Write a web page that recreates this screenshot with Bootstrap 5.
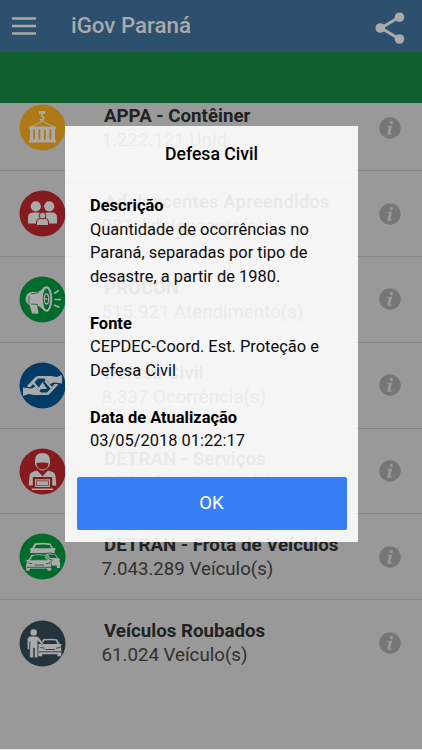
<!DOCTYPE html>
<html lang="pt-BR">
<head>
<meta charset="utf-8">
<meta name="viewport" content="width=device-width, initial-scale=1">
<title>iGov Paraná</title>
<link href="https://cdn.jsdelivr.net/npm/bootstrap@5.3.0/dist/css/bootstrap.min.css" rel="stylesheet">
<style>
  html, body { height: 750px; overflow: hidden; }
  body { font-family: Roboto, "Liberation Sans", sans-serif; background: #999; color: #222; }
  svg { display: block; flex: none; }
  .app { height: 750px; border-bottom: 1px solid #e6e6e6; }
  .topbar { height: 52px; background: #2d506f; color: #aaa; padding: 0 17px 0 12px; position: relative; z-index: 2; }
  .topbar-title { font-size: 22.3px; font-weight: 500; line-height: 1; margin-left: 35px; margin-top: -1px; }
  .greenbar { height: 51px; background: #10602f; position: relative; z-index: 2; }
  .entries { margin-top: -17.5px; }
  .entry { height: 85.8px; border-bottom: 1.5px solid #858585; padding: 0 21px 0 19px; }
  .entry:last-child { border-bottom: 0; }
  .entry-text { margin-left: 36px; padding-top: 18.5px; white-space: nowrap; }
  .entry-name { font-size: 18.7px; font-weight: 700; line-height: 25px; padding-left: 2px; }
  .entry-value { font-size: 18.7px; line-height: 22px; color: #303030; margin-left: -.5px; }
  .detail { width: 293px; height: 415.5px; top: 126px; left: 65px; background: rgba(255,255,255,.9); color: #000; z-index: 5; }
  .detail-title { height: 56.5px; font-size: 17.6px; font-weight: 500; border-bottom: 1px solid #f0f0f0; }
  .detail-body { padding: 11.5px 25px 0; font-size: 16.45px; line-height: 23.5px; height: 294.5px; color: #0c0c0c; white-space: nowrap; }
  .detail-body p { margin-bottom: 23.5px; }
  .detail-body strong { color: #000; font-weight: 700; }
  .ok { height: 53px; margin: 0 11.5px; background: #387ef5; color: #fff; border: 0; border-radius: 2px; font-size: 18.6px; width: 270px; }
</style>
<script src="https://cdn.jsdelivr.net/npm/bootstrap@5.3.0/dist/js/bootstrap.bundle.min.js"></script>
</head>
<body>
<svg width="0" height="0" class="position-absolute" aria-hidden="true">
  <symbol id="info" viewBox="0 0 22 22">
    <circle cx="11" cy="11" r="10.7" fill="#767676"/>
    <circle cx="12.3" cy="5.4" r="1.7" fill="#999"/>
    <path d="M7.900 9.200 13.200 8.600 11.400 15.800q-.2 1 .5.7l1.200-.7.3.6q-2 1.800-3.700 1.700-1.700-.2-1.300-2l1.300-5.200q.2-.8-.5-.9l-1.400-.1z" fill="#999"/>
  </symbol>
</svg>
<div class="app">
  <header class="topbar d-flex align-items-center">
    <svg width="24" height="18" viewBox="0 0 24 18"><path d="M0 1.500h24M0 9h24M0 16.500h24" stroke="#aaa" stroke-width="2.500"/></svg>
    <div class="topbar-title">iGov Paraná</div>
    <svg class="ms-auto mt-1" width="30" height="32" viewBox="0 0 30 32"><path d="M24.500 5 6 16 24.500 27" fill="none" stroke="#aaa" stroke-width="3"/><circle cx="24.500" cy="5.200" r="4.800" fill="#aaa"/><circle cx="5.300" cy="16" r="4.800" fill="#aaa"/><circle cx="24.500" cy="27" r="4.800" fill="#aaa"/></svg>
  </header>
  <div class="greenbar"></div>
  <main class="entries">
    <div class="entry d-flex align-items-center">
      <svg width="47" height="47" viewBox="0 0 47 47"><circle cx="23.500" cy="23.500" r="23" fill="#ad7a17"/>
        <path d="M20 7h6v3h-6z" fill="#aaa"/><path d="M23 9.500v3q2.500 1 1.300 3-2 1.500-3.300-.5" fill="none" stroke="#aaa" stroke-width="1.600"/><path d="M23 17.300 12 23M23.500 17.300 35 23" stroke="#aaa" stroke-width="1"/>
        <path fill="#aaa" fill-rule="evenodd" d="M10 22.500h27v2.500h-1v11h1v2.500H10V36h1V25h-1zM14.200 25.500v10h1.800v-10zM19.500 25.500v10h1.800v-10zM25 25.500v10h1.800v-10zM30.500 25.500v10h1.800v-10z"/></svg>
      <div class="entry-text align-self-start"><div class="entry-name">APPA - Contêiner</div><div class="entry-value">1.222.121 Unid</div></div>
      <svg class="ms-auto" width="22" height="22"><use href="#info"/></svg>
    </div>
    <div class="entry d-flex align-items-center">
      <svg width="47" height="47" viewBox="0 0 47 47"><circle cx="23.500" cy="23.500" r="23" fill="#861b1f"/>
        <g fill="#aaa"><circle cx="16.800" cy="16.300" r="5.100"/><circle cx="30.200" cy="16.300" r="5.100"/><path d="M9 33.500V27.500q0-5 5-5h4.500q4 0 4.500 4v7zM38 33.500V27.500q0-5-5-5h-4.500q-4 0-4.500 4v7z"/></g>
        <g fill="#aaa" stroke="#861b1f" stroke-width="1"><path d="M17.500 35.500V32q0-3.500 3.500-3.500h5q3.500 0 3.500 3.500v3.500z"/><circle cx="23.500" cy="25.700" r="3.300"/></g></svg>
      <div class="entry-text align-self-start"><div class="entry-name">Adolescentes Apreendidos</div><div class="entry-value">931 Adolescente(s)</div></div>
      <svg class="ms-auto" width="22" height="22"><use href="#info"/></svg>
    </div>
    <div class="entry d-flex align-items-center">
      <svg width="47" height="47" viewBox="0 0 47 47"><circle cx="23.500" cy="23.500" r="23" fill="#006b2b"/>
        <path fill="#aaa" d="M8 18.500q3-3.500 8-2.500 6 0 9-5.500-3 13 0 24.500-3-4.500-7-5.500l1.500 7.500q0 1-2 .8L13 37.500 10.500 29q-4-2-4-6.500z"/>
        <path d="M10 19.500v8M12 18l8-1.500M12 28l7 .5" stroke="#006b2b" stroke-width=".8" fill="none"/>
        <ellipse cx="27.500" cy="23" rx="4.700" ry="11.800" fill="#006b2b" stroke="#aaa" stroke-width="2"/><ellipse cx="27.500" cy="23" rx="2.200" ry="5" fill="none" stroke="#aaa" stroke-width="1.300"/><circle cx="27.300" cy="23" r="1.100" fill="#aaa"/>
        <path d="m35 17.500 5-3M35.500 23.500h6.500M35 29l5.500 2.500" stroke="#aaa" stroke-width="1.500"/></svg>
      <div class="entry-text align-self-start"><div class="entry-name">PROCON</div><div class="entry-value">515.921 Atendimento(s)</div></div>
      <svg class="ms-auto" width="22" height="22"><use href="#info"/></svg>
    </div>
    <div class="entry d-flex align-items-center">
      <svg width="47" height="47" viewBox="0 0 47 47"><circle cx="23.500" cy="23.500" r="23" fill="#003c66"/>
        <g id="relief-hand"><path fill="#aaa" d="M43 13v8.500l-7.500-1q-2.500-.2-4.500 2l-3-3.500-3-2.500h-6L11.500 25H8.500l-.5-1 8-8.500q1.300-1.500 3.500-1.500H32l5.500 1z"/><path fill="none" stroke="#aaa" stroke-width="2.200" d="m26 18.500 6.500 7.500"/></g>
        <use href="#relief-hand" transform="rotate(180 23.500 23.500)"/>
        <path fill="#aaa" d="m23.500 20 4.500 7h-9z"/></svg>
      <div class="entry-text align-self-start"><div class="entry-name">Defesa Civil</div><div class="entry-value">8.337 Ocorrência(s)</div></div>
      <svg class="ms-auto" width="22" height="22"><use href="#info"/></svg>
    </div>
    <div class="entry d-flex align-items-center">
      <svg width="47" height="47" viewBox="0 0 47 47"><circle cx="23.500" cy="23.500" r="23" fill="#861b1f"/>
        <path fill="#aaa" d="M16 12.500q0-7.500 7.500-7.500t7.500 7.500v3q0 3-3 5-2 2-4.500 2t-4.500-2q-3-2-3-5z"/>
        <path fill="#861b1f" d="M17.500 15q6-1.200 12 0 0 6-6 6.500-6-.5-6-6.500z"/>
        <path fill="#aaa" d="M18 22.500 23.500 28l5.500-5.500 5 1.500q2 1 2.500 4l.8 9.500H9.700l.8-9.500q.5-3 2.500-4z"/>
        <path fill="#861b1f" d="m20 23.500 3.500 5 3.500-5-3.500 1.500z"/>
        <path fill="#aaa" stroke="#861b1f" stroke-width="2.800" d="M15.200 30.500h16.600v9H15.200z"/><path d="M16 31.300h15v7.700H16zM12.800 40.500h21.400v1.500H12.800z" fill="#aaa"/><path d="M17.300 32.500h12.400v5.500H17.300z" fill="#861b1f"/><path d="M18 33.200h11v4.200H18z" fill="#aaa"/></svg>
      <div class="entry-text align-self-start"><div class="entry-name">DETRAN - Serviços</div><div class="entry-value">3.734.914 Serviço(s)</div></div>
      <svg class="ms-auto" width="22" height="22"><use href="#info"/></svg>
    </div>
    <div class="entry d-flex align-items-center">
      <svg width="47" height="47" viewBox="0 0 47 47"><circle cx="23.500" cy="23.500" r="23" fill="#006b2b"/>
        <path fill="#aaa" fill-rule="evenodd" d="m10.500 15.500 2.500-.5 2.500-4.500q8-1.500 16 0l2.500 4.500 3 .5-1.500 2 .5 2.500H11l.5-2.500zM15.300 15.200h17.200l-1.800-3.200q-7-1-13.500 0z"/>
        <path fill="#aaa" stroke="#006b2b" stroke-width=".9" d="M25 20.500q8-1 12 .5l2.500 4 2.500.5-1 2 .5 3v5h-4V33H27z"/><path fill="#006b2b" d="m29 21.500 7 .3 2 3.200h-7z"/>
        <path fill="#aaa" stroke="#006b2b" stroke-width=".7" fill-rule="evenodd" d="m6 27 3.500-.8 3-4.700q7.500-1.200 14.500 0l3 4.700 3.500.8-1.800 1.500.8 3v6.500h-4.500V36H11v2H6.800v-6.500l1-3zM11.500 26.800h16.800l-2.500-3.800q-6-1-11.700 0z"/>
        <path d="m9.500 30 4 .8M31 30l-4 .8M15.500 32h9.500M8 34.300h24" stroke="#006b2b" stroke-width=".9"/></svg>
      <div class="entry-text align-self-start"><div class="entry-name">DETRAN - Frota de Veículos</div><div class="entry-value">7.043.289 Veículo(s)</div></div>
      <svg class="ms-auto" width="22" height="22"><use href="#info"/></svg>
    </div>
    <div class="entry d-flex align-items-center">
      <svg width="47" height="47" viewBox="0 0 47 47"><circle cx="23.500" cy="23.500" r="23" fill="#24343c"/>
        <path fill="#aaa" fill-rule="evenodd" d="m18.500 24.500 3.500-.8 2-4.500q7-1 14 0l2.500 4.500 2.500.8-1.500 2 .8 2.800v7h-4v-2H23v2h-3.800v-7l.4-2.800zM23.500 24h15l-1.700-3.500q-5.500-.6-11.500 0z"/>
        <g fill="#aaa"><circle cx="14.700" cy="12.500" r="3.200"/><path stroke="#24343c" stroke-width=".5" d="M8.300 20q0-3.800 3.200-3.800h6q2 0 3 2l3.800 5.300-1.500 1.200-4-4v17H15.500V28h-1v9.700h-3.700V21.500l-.3 8H8.300z"/></g>
        <path d="m21.500 27.500 4 .8M41 27.500l-4 .8M26.500 29.500h9.500M20 31.800h22" stroke="#24343c" stroke-width=".9"/></svg>
      <div class="entry-text align-self-start"><div class="entry-name">Veículos Roubados</div><div class="entry-value">61.024 Veículo(s)</div></div>
      <svg class="ms-auto" width="22" height="22"><use href="#info"/></svg>
    </div>
  </main>
</div>
<section class="detail position-absolute" role="dialog" aria-label="Defesa Civil">
  <div class="detail-title d-flex align-items-center justify-content-center">Defesa Civil</div>
  <div class="detail-body">
    <p><strong>Descrição</strong><br>Quantidade de ocorrências no<br>Paraná, separadas por tipo de<br>desastre, a partir de 1980.</p>
    <p><strong>Fonte</strong><br>CEPDEC-Coord. Est. Proteção e<br>Defesa Civil</p>
    <p><strong>Data de Atualização</strong><br>03/05/2018 01:22:17</p>
  </div>
  <button type="button" class="ok btn btn-primary d-block p-0">OK</button>
</section>
</body>
</html>
